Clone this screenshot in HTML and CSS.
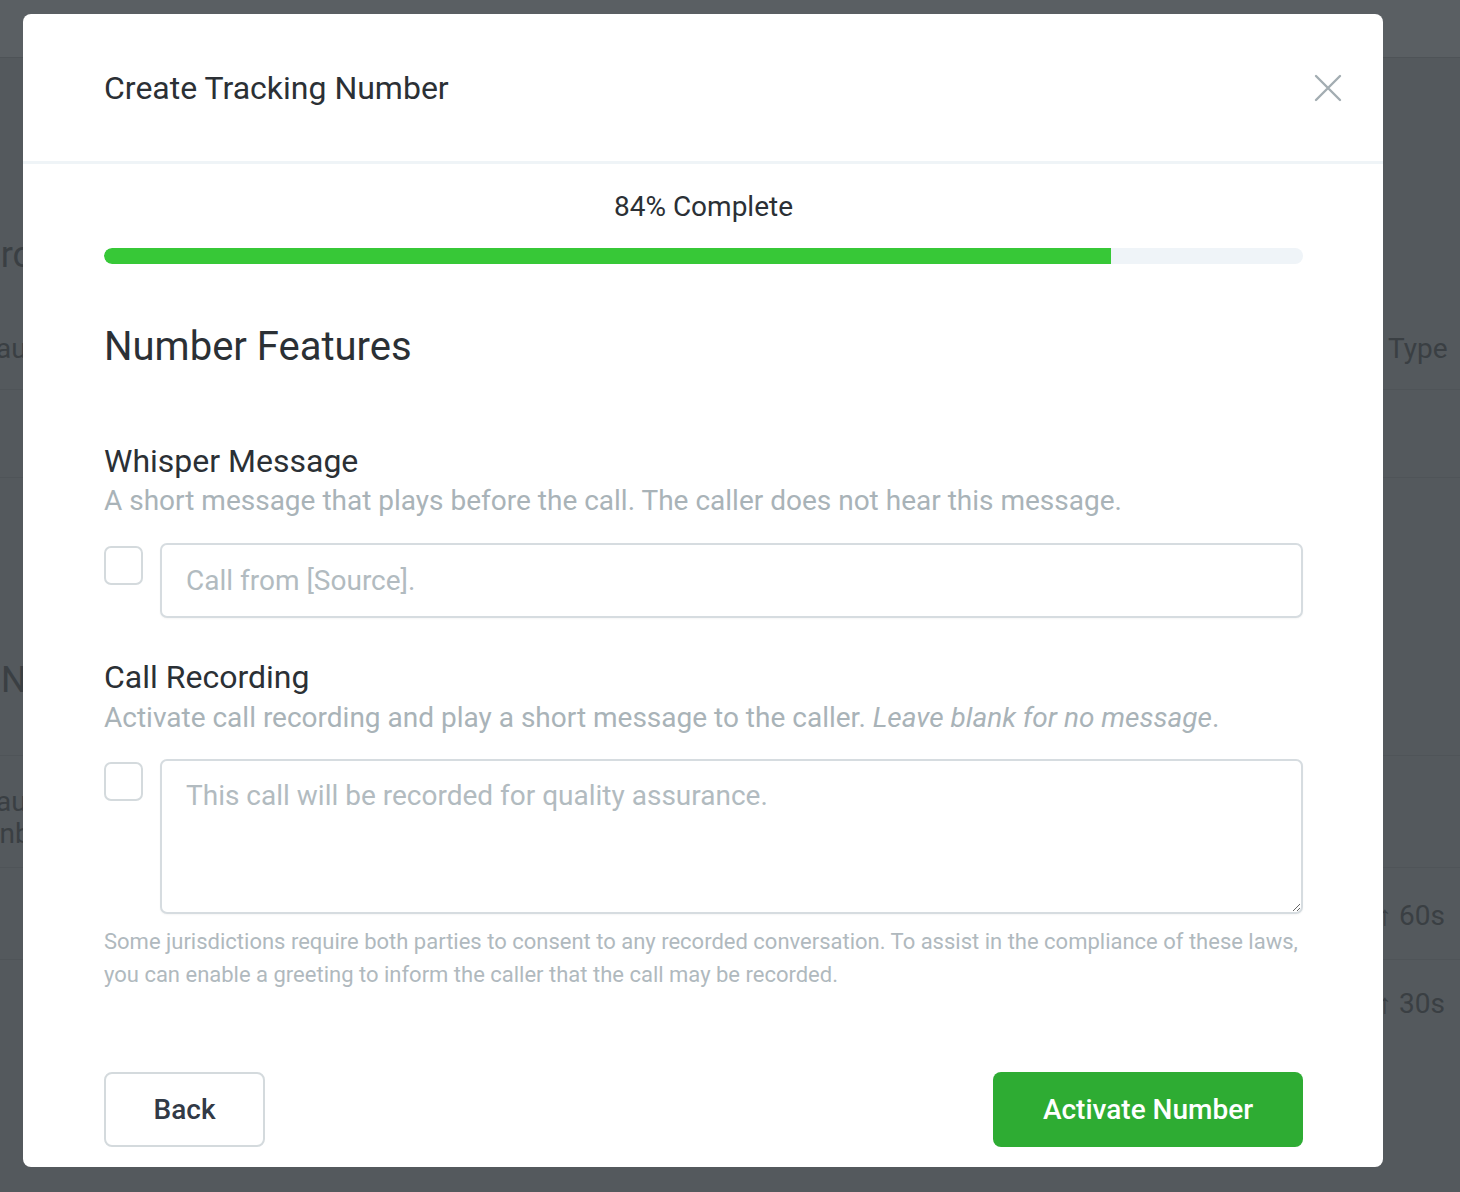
FILE: index.html
```html
<!DOCTYPE html>
<html lang="en">
<head>
<meta charset="utf-8">
<title>Create Tracking Number</title>
<link rel="stylesheet" href="styles.css">
</head>
<body>
<div class="bg-page">
  <div class="bg-header"></div>
  <div class="bg-row bg-row-1">
    <div class="bg-left">
      <span class="bg-big bg-promo">Promo Campaigns</span>
      <span class="bg-small bg-default bg-gap">Default Numbers</span>
    </div>
    <div class="bg-right"><span class="bg-small bg-type">Type</span></div>
  </div>
  <div class="bg-row bg-row-2"><div class="bg-left"></div><div class="bg-right"></div></div>
  <div class="bg-row bg-row-3">
    <div class="bg-left"><span class="bg-big bg-numbers">Numbers</span></div>
    <div class="bg-right"></div>
  </div>
  <div class="bg-row bg-row-4">
    <div class="bg-left">
      <span class="bg-small bg-default">Default</span>
      <span class="bg-small bg-inbound">Inbound</span>
    </div>
    <div class="bg-right"></div>
  </div>
  <div class="bg-row bg-row-5">
    <div class="bg-left"></div>
    <div class="bg-right"><span class="bg-small bg-arrow">&#x2191; 60s</span></div>
  </div>
  <div class="bg-row bg-row-6">
    <div class="bg-left"></div>
    <div class="bg-right"><span class="bg-small bg-arrow">&#x2191; 30s</span></div>
  </div>
</div>

<div class="overlay">
  <div class="modal">
    <div class="modal-header">
      <h1 class="modal-title">Create Tracking Number</h1>
      <button class="close-btn" aria-label="Close">
        <svg width="28" height="28" viewBox="0 0 28 28"><path d="M2 2 L26 26 M26 2 L2 26" stroke="#a3adb2" stroke-width="2.4" stroke-linecap="round" fill="none"/></svg>
      </button>
    </div>
    <div class="modal-body">
      <div class="progress-label">84% Complete</div>
      <div class="progress-track"><div class="progress-fill" style="width:84%"></div></div>

      <h2 class="section-title">Number Features</h2>

      <h3 class="feature-title first">Whisper Message</h3>
      <p class="feature-desc">A short message that plays before the call. The caller does not hear this message.</p>
      <div class="feature-row first">
        <span class="checkbox"></span>
        <input class="text-input" type="text" placeholder="Call from [Source].">
      </div>

      <h3 class="feature-title">Call Recording</h3>
      <p class="feature-desc second">Activate call recording and play a short message to the caller. <em>Leave blank for no message</em>.</p>
      <div class="feature-row">
        <span class="checkbox"></span>
        <textarea class="text-area" placeholder="This call will be recorded for quality assurance."></textarea>
      </div>
      <p class="note">Some jurisdictions require both parties to consent to any recorded conversation. To assist in the compliance of these laws, you can enable a greeting to inform the caller that the call may be recorded.</p>

      <div class="actions">
        <button class="btn btn-back">Back</button>
        <button class="btn btn-primary">Activate Number</button>
      </div>
    </div>
  </div>
</div>
</body>
</html>
```

FILE: styles.css
```css
* { box-sizing: border-box; }
html, body { margin: 0; padding: 0; }
body {
  width: 1460px;
  height: 1192px;
  overflow: hidden;
  background: #54595d;
  font-family: Roboto, "Liberation Sans", Arial, sans-serif;
}

/* background page (dimmed) */
.bg-page { display: flex; flex-direction: column; color: #3a3f43; }
.bg-header { height: 58px; background: #5a5f63; border-bottom: 1px solid #4e5357; }
.bg-row { display: flex; border-bottom: 1px solid #4f5458; }
.bg-left { width: 300px; display: flex; flex-direction: column; align-items: flex-start; white-space: nowrap; flex-shrink: 0; }
.bg-right { margin-left: 1083px; flex: 1; overflow: hidden; white-space: nowrap; padding-left: 5px; }
.bg-big { font-size: 36px; line-height: 44px; }
.bg-small { font-size: 28px; line-height: 32px; }
.bg-promo { margin-left: -22px; }
.bg-default { margin-left: -47px; }
.bg-inbound { margin-left: -8px; }
.bg-numbers { margin-left: 1px; }
.bg-row-1 { height: 332px; }
.bg-row-1 .bg-left { padding-top: 175px; }
.bg-gap { margin-top: 56px; }
.bg-type { display: block; padding-top: 275px; }
.bg-row-2 { height: 88px; }
.bg-row-3 { height: 278px; }
.bg-row-3 .bg-left { padding-top: 180px; }
.bg-row-4 { height: 112px; }
.bg-row-4 .bg-left { padding-top: 30px; }
.bg-row-5 { height: 92px; }
.bg-row-6 { height: 90px; border-bottom: none; }
.bg-arrow { display: block; padding-top: 32px; margin-left: -10px; }
.bg-row-6 .bg-arrow { padding-top: 28px; }

/* overlay + modal */
.overlay {
  position: fixed;
  inset: 0;
  padding: 14px 0 0 23px;
}
.modal {
  width: 1360px;
  background: #ffffff;
  border-radius: 8px;
  overflow: hidden;
  color: #2b3035;
}
.modal-header {
  height: 150px;
  padding: 0 41px 0 81px;
  display: flex;
  align-items: center;
  justify-content: space-between;
  border-bottom: 3px solid #eff4f7;
}
.modal-title {
  margin: 0;
  font-size: 32px;
  line-height: 36px;
  font-weight: 400;
  color: #2b3035;
}
.close-btn {
  border: none;
  background: transparent;
  padding: 0;
  width: 28px;
  height: 28px;
  display: flex;
  cursor: pointer;
}

.modal-body { padding: 0 80px 20px 81px; }

.progress-label {
  margin-top: 28px;
  text-align: center;
  font-size: 28px;
  line-height: 30px;
  color: #2b3035;
}
.progress-track {
  margin-top: 26px;
  height: 16px;
  border-radius: 8px;
  background: #eff4f8;
  overflow: hidden;
}
.progress-fill {
  height: 100%;
  background: #37c837;
  border-radius: 8px 0 0 8px;
}

.section-title {
  margin: 59px 0 0;
  font-size: 40px;
  line-height: 48px;
  font-weight: 400;
  color: #2b3035;
}
.feature-title {
  margin: 41px 0 0;
  font-size: 32px;
  line-height: 36px;
  font-weight: 400;
  color: #2b3035;
}
.feature-title.first { margin-top: 72px; }
.feature-desc {
  margin: 3px 0 0;
  font-size: 28px;
  line-height: 38px;
  color: #a9b3b8;
}
.feature-desc.second { margin-top: 4px; }
.feature-desc em { font-style: italic; }

.feature-row {
  margin-top: 22px;
  display: flex;
  align-items: flex-start;
  gap: 17px;
}
.feature-row.first { margin-top: 23px; }
.checkbox {
  flex: none;
  width: 39px;
  height: 39px;
  margin-top: 3px;
  border: 2px solid #d4dadd;
  border-radius: 7px;
  background: #fff;
}
.text-input, .text-area {
  display: block;
  flex: 1;
  border: 2px solid #d6dce0;
  border-radius: 7px;
  font-family: Roboto, "Liberation Sans", Arial, sans-serif;
  font-size: 28px;
  color: #2b3035;
  background: #fff;
  outline: none;
  box-shadow: 0 1px 2px rgba(0,0,0,0.04);
}
.text-input { height: 75px; padding: 0 24px; }
.text-area { height: 155px; padding: 17px 24px; line-height: 36px; resize: vertical; }
.text-input::placeholder, .text-area::placeholder { color: #b2bbc0; opacity: 1; }

.note {
  margin: 11px 0 0;
  font-size: 22px;
  line-height: 33px;
  color: #b0b9be;
}

.actions {
  margin-top: 81px;
  display: flex;
  justify-content: space-between;
}
.btn {
  height: 75px;
  border-radius: 8px;
  font-family: Roboto, "Liberation Sans", Arial, sans-serif;
  font-size: 28px;
  font-weight: 500;
  cursor: pointer;
}
.btn-back {
  width: 161px;
  background: #fff;
  border: 2px solid #d4dadd;
  color: #323a46;
}
.btn-primary {
  width: 310px;
  background: #2eac33;
  border: none;
  color: #ffffff;
}
```
